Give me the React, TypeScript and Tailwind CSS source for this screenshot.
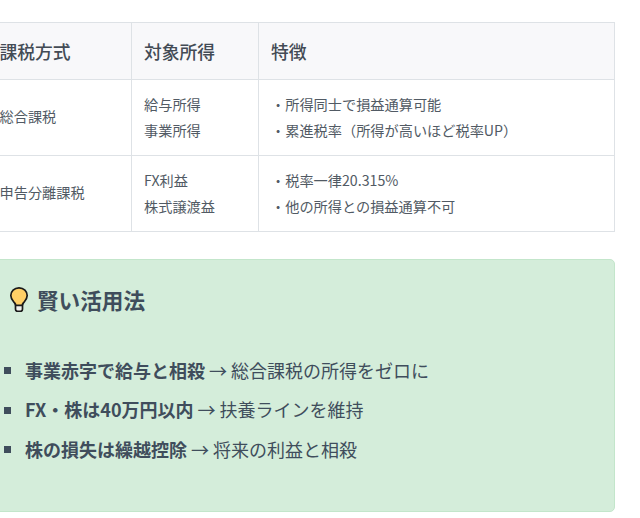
const font = "font-['Noto_Sans_CJK_JP','Noto_Sans',sans-serif]";

const rows = [
  {
    name: "総合課税",
    income: ["給与所得", "事業所得"],
    notes: ["所得同士で損益通算可能", "累進税率（所得が高いほど税率UP）"],
  },
  {
    name: "申告分離課税",
    income: ["FX利益", "株式譲渡益"],
    notes: ["税率一律20.315%", "他の所得との損益通算不可"],
  },
];

const tips = [
  { bold: "事業赤字で給与と相殺", rest: " → 総合課税の所得をゼロに" },
  { bold: "FX・株は40万円以内", rest: " → 扶養ラインを維持" },
  { bold: "株の損失は繰越控除", rest: " → 将来の利益と相殺" },
];

function Bulb() {
  return (
    <svg width="20" height="26" viewBox="0 0 20 26" className="mb-[2px] shrink-0">
      <path
        d="M6.500 18.500h7v4.800c0 1.200-1 2-2 2h-3c-1 0-2-.8-2-2z"
        fill="#f0f0ec"
        stroke="#1a1a1a"
        strokeWidth="1.700"
      />
      <path
        d="M10 1.800C5.200 1.800 1.800 5.300 1.800 9.600c0 3.300 1.900 5 3.400 6.800.9 1.100 1.500 2 1.600 3h6.400c.1-1 .7-1.900 1.600-3 1.500-1.800 3.400-3.500 3.400-6.800 0-4.300-3.400-7.800-8.200-7.800z"
        fill="#ffcf66"
        stroke="#1a1a1a"
        strokeWidth="1.700"
      />
    </svg>
  );
}

export default function App() {
  return (
    <div className={`${font} w-[640px] h-[518px] overflow-hidden bg-white`}>
      <div className="ml-[-13px] w-[628px] pt-[22px]">
        <table className="w-full table-fixed border-collapse text-[14.2px] text-[#515a64]">
          <thead>
            <tr className="h-[57px] bg-[#f8f8fa] text-left text-[17.8px] font-medium text-[#434b55]">
              <th className="w-[144px] border border-[#dee2e6] pl-[11.5px] pr-3 font-medium">課税方式</th>
              <th className="w-[127px] border border-[#dee2e6] px-3 font-medium">対象所得</th>
              <th className="border border-[#dee2e6] px-3 font-medium">特徴</th>
            </tr>
          </thead>
          <tbody>
            {rows.map((row) => (
              <tr key={row.name} className="h-[76px]">
                <td className="border border-[#dee2e6] pb-[2px] pl-[11.5px] pr-3">{row.name}</td>
                <td className="border border-[#dee2e6] px-3 pb-[2px] leading-[26px]">
                  {row.income.map((item) => (
                    <div key={item}>{item}</div>
                  ))}
                </td>
                <td className="border border-[#dee2e6] px-3 pb-[2px] leading-[26px]">
                  {row.notes.map((note) => (
                    <div key={note}>・{note}</div>
                  ))}
                </td>
              </tr>
            ))}
          </tbody>
        </table>

        <div className="mt-[27px] h-[253px] rounded-[5px] border border-[#c3e6cb] bg-[#d4edda] pl-[21px] pt-[23px] text-[#3f4d5c]">
          <h2 className="flex h-[34px] items-center gap-[8px] text-[21.6px] font-bold">
            <Bulb />
            賢い活用法
          </h2>
          <ul className="mt-[37.700px] flex flex-col gap-2 text-[18px] leading-[31.7px]">
            {tips.map((tip) => (
              <li key={tip.bold} className="flex items-center">
                <span className="mr-[14px] ml-[-5px] size-[7px] bg-[#3f4d5c]" />
                <span>
                  <strong className="font-bold">{tip.bold}</strong>
                  {tip.rest}
                </span>
              </li>
            ))}
          </ul>
        </div>
      </div>
    </div>
  );
}
